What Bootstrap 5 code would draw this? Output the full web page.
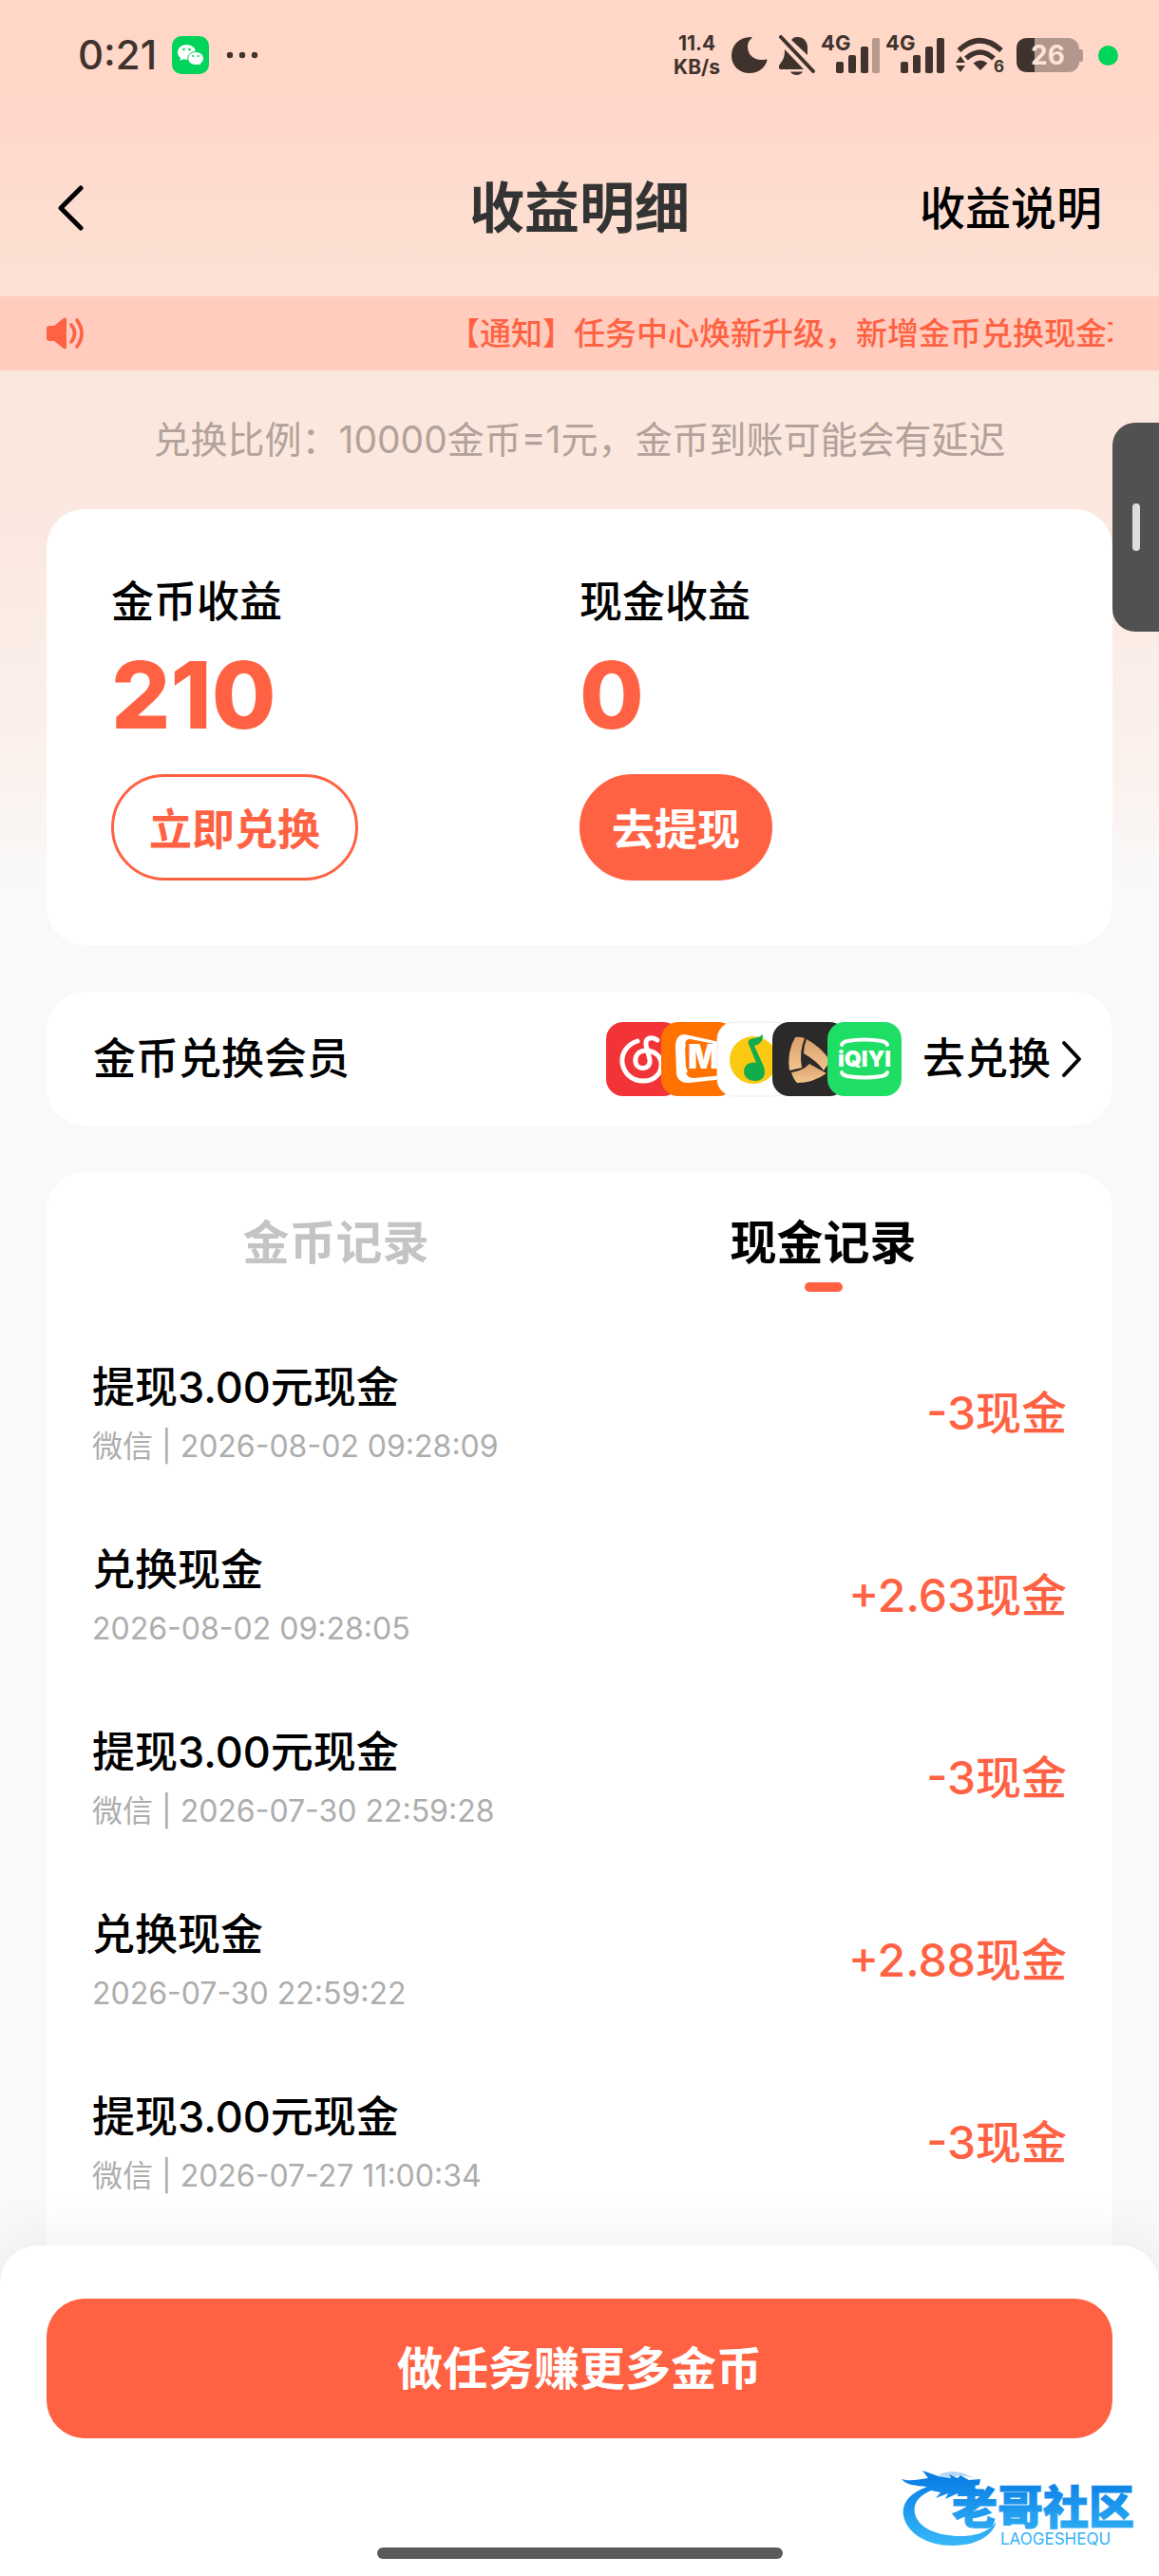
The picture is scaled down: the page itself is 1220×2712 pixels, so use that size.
<!DOCTYPE html>
<html lang="zh-CN">
<head>
<meta charset="utf-8">
<meta name="viewport" content="width=device-width, initial-scale=1">
<title>收益明细</title>
<link href="https://cdn.jsdelivr.net/npm/bootstrap@5.3.0/dist/css/bootstrap.min.css" rel="stylesheet">
<style>
:root{--brand:#ff6243;--ink:#40332d}
body{font-family:Inter,"Noto Sans CJK SC",sans-serif;color:#000;background:#f9f9f9}
a{text-decoration:none;color:inherit}
svg{display:block;flex:none}
.app{background:linear-gradient(180deg,#ffd7c6 0,#ffd8cb 130px,#fcdfd1 250px,#fbe7dc 400px,#fbe8e0 560px,#fbf1ed 800px,#f9f9f9 930px)}
.statusbar{height:116px;padding:0 43px 0 82px;color:var(--ink)}
.clock{font-size:42px;font-weight:500;line-height:1}
.rate{font-size:21px;font-weight:700;line-height:25px}
.sys-icons{gap:12px}
.sys-icons text{font-weight:700;fill:var(--ink)}
.signal{margin-left:-6px}
.live-dot{width:21px;height:21px;background:#00d45a;margin-left:4px}
.topnav{height:196px;padding:12px 60px 0;display:grid;grid-template-columns:1fr auto 1fr;align-items:center}
.topnav h1{font-size:58px;color:#333;font-weight:700}
.topnav .explain{font-size:48px;font-weight:500}
.notice{height:78px;padding:0 49px;background:#ffccbe;color:var(--brand)}
.notice-text{font-size:33px;font-weight:500;line-height:78px;padding-left:383px}
.ratio{font-size:39px;line-height:58px;padding:44px 0;color:#b2a29a}
.page-body{padding:0 49px}
.panel{background:#fff;border-radius:40px}
.earnings{padding:67px 68px 68px}
.label{font-size:45px;line-height:62px;font-weight:500}
.total{font-size:98px;line-height:110px;font-weight:800;color:var(--brand);margin-top:12px}
.btn-pill{--bs-btn-font-size:45px;--bs-btn-font-weight:700;--bs-btn-line-height:1;--bs-btn-border-width:3px;--bs-btn-color:var(--brand);--bs-btn-border-color:var(--brand);--bs-btn-hover-color:#fff;--bs-btn-hover-bg:var(--brand);height:112px;margin-top:28px;padding:4px 37px 0}
.btn-solid{--bs-btn-color:#fff;--bs-btn-bg:var(--brand);padding:4px 31px 0}
.member{height:141px;margin-top:49px;padding:0 31px 0 49px}
.chevron{margin-left:10px}
.redeem{margin-left:22px}
.records{margin-top:49px;padding:0 48px;border-radius:40px 40px 0 0}
.tab{border:0;background:none;padding:44px 0 0;font-size:49px;line-height:62px;font-weight:700;color:#c4c4c4}
.tab::after{content:"";display:block;width:40px;height:10px;border-radius:5px;margin:10px auto 0}
.tab.active{color:#000}
.tab.active::after{background:var(--brand)}
.record-list{margin-top:32px}
.record{padding:39px 0}
.record-name{font-size:45px;line-height:60px;font-weight:500}
.record-meta{font-size:32px;line-height:44px;color:#adadad;margin-top:10px}
.amount{font-size:48px;font-weight:500;color:var(--brand)}
.dock{background:#fff;border-radius:40px 40px 0 0;padding:56px 49px 18px;box-shadow:0 0 64px rgba(0,0,0,.08)}
.btn-task{--bs-btn-font-size:48px;--bs-btn-font-weight:700;--bs-btn-color:#fff;--bs-btn-bg:var(--brand);--bs-btn-border-color:var(--brand);--bs-btn-border-radius:40px;height:147px}
.home-bar{width:427px;height:12px;background:#5a5a5a;margin-top:115px}
.stamp{position:absolute;right:18px;bottom:26px}
.side-handle{position:absolute;right:0;top:445px;width:49px;height:220px;border:0;border-radius:24px 0 0 24px;background:#515151;padding:0}
.side-handle span{display:block;width:8px;height:50px;border-radius:4px;background:#ddd;margin-left:21px}
</style>
<script src="https://cdn.jsdelivr.net/npm/bootstrap@5.3.0/dist/js/bootstrap.bundle.min.js"></script>
</head>
<body>
<div class="app d-flex flex-column min-vh-100 position-relative">

  <div class="statusbar d-flex align-items-center justify-content-between">
    <div class="d-flex align-items-center">
      <span class="clock">0:21</span>
      <svg class="ms-3" width="39" height="40" viewBox="0 0 39 40" aria-hidden="true">
        <rect width="39" height="40" rx="10" fill="#00d45a"/>
        <path d="M15.500 9C10 9 6 12.600 6 17c0 2.500 1.200 4.500 3.200 6l-.7 3 3.600-1.700c1.200.4 2.400.5 3.800.5C21 24.800 25 21.300 25 17s-4-8-9.500-8z" fill="#fff"/>
        <path d="M25 16.500c-4.700 0-8.300 3.100-8.300 7s3.600 7 8.300 7c1.200 0 2.200-.2 3.200-.5l2.800 1.500-.6-2.600c1.800-1.300 3-3.200 3-5.400 0-3.900-3.700-7-8.400-7z" fill="#fff" stroke="#00d45a" stroke-width="1"/>
        <g fill="#00d45a"><circle cx="12.500" cy="14" r="1.300"/><circle cx="18.500" cy="14" r="1.300"/><circle cx="22.200" cy="21" r="1.100"/><circle cx="27.600" cy="21" r="1.100"/></g>
      </svg>
      <svg width="34" height="8" viewBox="0 0 34 8" style="margin-left:18px" fill="#40332d" aria-hidden="true"><circle cx="4" cy="4" r="3.200"/><circle cx="17" cy="4" r="3.200"/><circle cx="30" cy="4" r="3.200"/></svg>
    </div>
    <div class="sys-icons d-flex align-items-center">
      <div class="rate text-center">11.4<br>KB/s</div>
      <svg width="38" height="40" viewBox="0 0 38 40" aria-hidden="true"><path d="M21 1C9 .5 0 9 0 20.500 0 31.500 8.500 39 19 39c9.500 0 17-6 18.500-14-.1-.7-.7-.9-1.300-.6C26 27 17 21 17 11c0-3.500 1.300-6.300 4-8.500.7-.6.6-1.400 0-1.500z" fill="#40332d"/></svg>
      <svg width="38" height="42" viewBox="0 0 38 42" aria-hidden="true"><g fill="#40332d"><path d="M18 2c8-1 12 5 12 11v8L13 5c1.300-1.600 3-2.700 5-3z"/><path d="M6 15c0 5-.5 8-2 11L0 32c-.6 2 .3 4 2 4h24L7 16z"/><path d="M12 38.500h13c-2 4.500-11 4.500-13 0z"/></g><path d="M2 2l34 36" stroke="#40332d" stroke-width="4" stroke-linecap="round"/></svg>
      <svg class="signal" width="62" height="58" viewBox="0 -8 62 58" role="img" aria-label="4G"><text x="0" y="16" font-size="22">4G</text><g fill="#40332d"><rect x="16" y="28" width="8" height="12" rx="2"/><rect x="29" y="21" width="8" height="19" rx="2"/><rect x="42" y="12" width="8" height="28" rx="2"/><rect x="54" y="3" width="8" height="37" rx="2" opacity=".38"/></g></svg>
      <svg class="signal" width="62" height="58" viewBox="0 -8 62 58" role="img" aria-label="4G"><text x="0" y="16" font-size="22">4G</text><g fill="#40332d"><rect x="16" y="28" width="8" height="12" rx="2"/><rect x="29" y="21" width="8" height="19" rx="2"/><rect x="42" y="12" width="8" height="28" rx="2"/><rect x="54" y="3" width="8" height="37" rx="2"/></g></svg>
      <svg width="52" height="52" viewBox="0 -6 52 52" role="img" aria-label="Wi-Fi 6"><g fill="none" stroke="#40332d" stroke-width="5.500"><path d="M3.500 15Q25-5.500 48 15"/><path d="M11 23.500Q25.500 10.500 40 23.500"/></g><path d="M18.500 28.500q7.500-6 15 0L26 36z" fill="#40332d"/><path d="M0 28l5-7 5 7zM0 31h10l-5 7z" fill="#40332d"/><text x="40" y="38" font-size="17">6</text></svg>
      <svg width="70" height="38" viewBox="0 0 70 38" role="img" aria-label="26%"><path d="M12 1h42c8 0 12 6 12 12h2q2 0 2 2v9q0 2-2 2h-2c0 6-4 11-12 11H12C4 37 0 33 0 25V13C0 5 4 1 12 1z" fill="#b2978d"/><path d="M12 1h7v36h-7C4 37 0 33 0 25V13C0 5 4 1 12 1z" fill="#40332d"/><text x="15" y="29" font-size="28" style="fill:#ffe2d8">26</text></svg>
      <span class="live-dot rounded-circle"></span>
    </div>
  </div>

  <header class="topnav">
    <a href="#" aria-label="返回"><svg width="28" height="50" viewBox="0 0 28 50"><path d="M25 3L4 24l21 21" fill="none" stroke="#000" stroke-width="5" stroke-linecap="round" stroke-linejoin="round"/></svg></a>
    <h1 class="m-0">收益明细</h1>
    <a href="#" class="explain text-end">收益说明</a>
  </header>

  <div class="notice d-flex align-items-center">
    <svg width="40" height="34" viewBox="0 0 40 34" aria-hidden="true"><path d="M3 9h5L18 1q3-1.500 3 2v28q0 3.500-3 2L8 25H3q-3 0-3-3V12q0-3 3-3z" fill="#ff6243"/><path d="M26 8q7 9 0 18M32 3q10 14 0 28" fill="none" stroke="#ff6243" stroke-width="3.600" stroke-linecap="round"/></svg>
    <div class="notice-text flex-grow-1 text-nowrap overflow-hidden">【通知】任务中心焕新升级，新增金币兑换现金功</div>
  </div>

  <p class="ratio text-center m-0">兑换比例：10000金币=1元，金币到账可能会有延迟</p>

  <main class="page-body d-flex flex-column flex-grow-1">
    <section class="panel earnings">
      <div class="row g-0">
        <div class="col-6">
          <div class="label">金币收益</div>
          <div class="total">210</div>
          <button type="button" class="btn btn-pill rounded-pill">立即兑换</button>
        </div>
        <div class="col-6">
          <div class="label">现金收益</div>
          <div class="total">0</div>
          <button type="button" class="btn btn-pill btn-solid rounded-pill">去提现</button>
        </div>
      </div>
    </section>

    <a href="#" class="panel member d-flex align-items-center justify-content-between">
      <span class="label">金币兑换会员</span>
      <span class="d-flex align-items-center">
        <svg width="311" height="80" viewBox="0 0 311 80" aria-hidden="true">
          <defs><linearGradient id="gold" x1="0" y1="0" x2="0" y2="1"><stop offset="0" stop-color="#d9a06c"/><stop offset="1" stop-color="#f3c58f"/></linearGradient></defs>
          <rect y="1" width="78" height="78" rx="18" fill="#f23337"/>
          <path d="M33 21C21 25 16 35 17 44c2 12 11 19 22 19 13 0 20-9 19-19-1-8-8-13-16-13-8 0-12 6-11 12 1 9 16 9 15-2L42 25c-1-8 7-9 12-5" fill="none" stroke="#fff" stroke-width="5" stroke-linecap="round"/>
          <rect x="58" y="1" width="78" height="78" rx="18" fill="#ff7200"/>
          <path d="M83 14l50 11v35l-46 5q-12 0-13-10l-1-28q0-13 10-13z" fill="#fff"/>
          <path d="M89 19l44 9v28l-41 4q-8 0-8-8l-1-26q0-8 6-7z" fill="#ff7200"/>
          <path d="M83 24q-4 16 2 30" fill="none" stroke="#fff" stroke-width="2"/>
          <text x="86" y="50" font-size="35" font-weight="900" fill="#fff">M</text>
          <rect x="117" y="1" width="78" height="78" rx="18" fill="#fff" stroke="#ececec"/>
          <circle cx="155" cy="41" r="25" fill="#fbc911"/>
          <path d="M165 14c0 8-3 10-9 12l10 22c3 9-1 15-9 15-7 0-12-4-12-10 0-7 7-11 13-9l-8-20c-2-8 9-4 15-10z" fill="#13ac4c"/>
          <rect x="175" y="1" width="78" height="78" rx="18" fill="#2c2a29"/>
          <g fill="url(#gold)"><path d="M199 17q5-1 10 1-6 14-3 31l-13 3q-3-19 6-35z"/><path d="M211 19q15 8 25 23l-7 10q-7-10-21-18 0-8 3-15z"/><path d="M195 54q11-1 19-9l18 10q-14 10-31 10-4-4-6-11z"/></g>
          <rect x="233" y="1" width="78" height="78" rx="18" fill="#1fde66"/>
          <path d="M248 25q1-3 6-4 18-3 36 0 5 1 6 4M248 54q1 3 6 4 18 3 36 0 5-1 6-4" fill="none" stroke="#fff" stroke-width="4" stroke-linecap="round"/>
          <text x="272" y="48" font-size="23" font-weight="900" fill="#fff" text-anchor="middle">iQIYI</text>
        </svg>
        <span class="label redeem">去兑换</span>
        <svg class="chevron" width="24" height="40" viewBox="0 0 24 40" aria-hidden="true"><path d="M4 3l16 17L4 37" fill="none" stroke="#000" stroke-width="4" stroke-linecap="round" stroke-linejoin="round"/></svg>
      </span>
    </a>

    <section class="panel records flex-grow-1">
      <div class="nav nav-fill" role="tablist">
        <button type="button" class="tab col" role="tab" aria-selected="false">金币记录</button>
        <button type="button" class="tab col active" role="tab" aria-selected="true">现金记录</button>
      </div>
      <ul class="record-list list-unstyled mb-0">
        <li class="record d-flex align-items-center justify-content-between"><div><div class="record-name">提现3.00元现金</div><div class="record-meta">微信 | 2026-08-02 09:28:09</div></div><span class="amount">-3现金</span></li>
        <li class="record d-flex align-items-center justify-content-between"><div><div class="record-name">兑换现金</div><div class="record-meta">2026-08-02 09:28:05</div></div><span class="amount">+2.63现金</span></li>
        <li class="record d-flex align-items-center justify-content-between"><div><div class="record-name">提现3.00元现金</div><div class="record-meta">微信 | 2026-07-30 22:59:28</div></div><span class="amount">-3现金</span></li>
        <li class="record d-flex align-items-center justify-content-between"><div><div class="record-name">兑换现金</div><div class="record-meta">2026-07-30 22:59:22</div></div><span class="amount">+2.88现金</span></li>
        <li class="record d-flex align-items-center justify-content-between"><div><div class="record-name">提现3.00元现金</div><div class="record-meta">微信 | 2026-07-27 11:00:34</div></div><span class="amount">-3现金</span></li>
      </ul>
    </section>
  </main>

  <footer class="dock sticky-bottom">
    <button type="button" class="btn btn-task w-100">做任务赚更多金币</button>
    <div class="home-bar rounded-pill mx-auto"></div>
    <svg class="stamp" width="254" height="90" viewBox="0 0 254 90" role="img" aria-label="老哥社区">
      <defs><linearGradient id="sea" gradientUnits="userSpaceOnUse" x1="0" y1="14" x2="0" y2="84"><stop offset="0" stop-color="#0a7fe6"/><stop offset="1" stop-color="#37b8f8"/></linearGradient></defs>
      <g fill="url(#sea)">
        <path d="M28 22C9 29 1 40 3 52c3 19 25 32 52 32 23 0 41-9 46-25-9 11-22 15-38 15-25 0-45-9-48-24-2-11 4-18 17-24l10 2-5 6 13-5-3 6 13-6 8 3 12-1 2-6-10-3 11-2 1-6-12 1-9-5-3 3-9-4 2 4-13-2-17-6 6 8C18 14 11 17 1 14c5 6 14 7 27 8z"/>
        <path d="M39 10Q52 3 67 8l13 6Q65 8 50 12z" opacity=".3"/>
        <text x="54" y="61" font-size="48" font-weight="900" stroke="url(#sea)" stroke-width="1">老哥社区</text>
        <text x="105" y="83" font-size="17" font-weight="400">LAOGESHEQU</text>
      </g>
    </svg>
  </footer>

  <button type="button" class="side-handle" aria-label="侧边栏"><span></span></button>
</div>
</body>
</html>
